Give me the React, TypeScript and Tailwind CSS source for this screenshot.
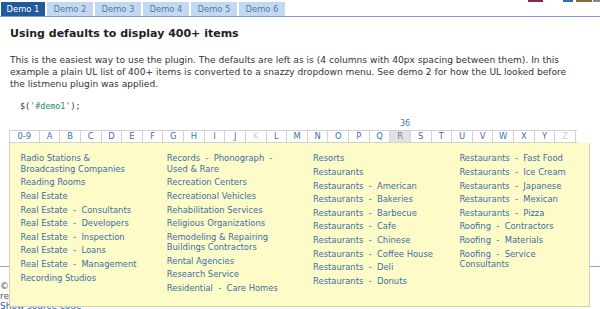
import React from "react";

const S = " \u00a0-\u00a0 ";

const columns: string[][] = [
  [
    "Radio Stations & Broadcasting Companies",
    "Reading Rooms",
    "Real Estate",
    `Real Estate${S}Consultants`,
    `Real Estate${S}Developers`,
    `Real Estate${S}Inspection`,
    `Real Estate${S}Loans`,
    `Real Estate${S}Management`,
    "Recording Studios",
  ],
  [
    `Records${S}Phonograph${S}Used & Rare`,
    "Recreation Centers",
    "Recreational Vehicles",
    "Rehabilitation Services",
    "Religious Organizations",
    "Remodeling & Repairing Buildings Contractors",
    "Rental Agencies",
    "Research Service",
    `Residential${S}Care Homes`,
  ],
  [
    "Resorts",
    "Restaurants",
    `Restaurants${S}American`,
    `Restaurants${S}Bakeries`,
    `Restaurants${S}Barbecue`,
    `Restaurants${S}Cafe`,
    `Restaurants${S}Chinese`,
    `Restaurants${S}Coffee House`,
    `Restaurants${S}Deli`,
    `Restaurants${S}Donuts`,
  ],
  [
    `Restaurants${S}Fast Food`,
    `Restaurants${S}Ice Cream`,
    `Restaurants${S}Japanese`,
    `Restaurants${S}Mexican`,
    `Restaurants${S}Pizza`,
    `Roofing${S}Contractors`,
    `Roofing${S}Materials`,
    `Roofing${S}Service Consultants`,
  ],
];

const letters = ["A","B","C","D","E","F","G","H","I","J","K","L","M","N","O","P","Q","R","S","T","U","V","W","X","Y","Z"];
const tabs = ["Demo 1", "Demo 2", "Demo 3", "Demo 4", "Demo 5", "Demo 6"];

export default function App() {
  return (
    <div className="relative w-[600px] h-[309px] overflow-hidden bg-white font-['DejaVu_Sans',Verdana,sans-serif] text-[#333]">
      {/* cut-off header images at top right */}
      <div className="absolute top-0 right-0 flex h-[2px]">
        <div className="w-[15px] bg-[#7b2d57] mr-[20px]" />
        <div className="w-[10px] bg-[#2f6fb8] mr-[3px]" />
        <div className="w-[16px] bg-[#e58a2e] border border-[#8a6a40] mr-[1px]" />
        <div className="w-[7px] border border-[#888]" />
      </div>

      {/* tabs */}
      <div className="flex gap-[2px] pl-[1px] pt-[2px] border-b border-[#7d9bcb]">
        {tabs.map((t, i) => (
          <div
            key={t}
            className={
              i === 0
                ? "w-[44px] h-[14px] flex items-center justify-center text-[8.4px] leading-[14px] bg-[#22599b] text-white"
                : "w-[46px] h-[14px] flex items-center justify-center text-[8.4px] leading-[14px] bg-[#c6d8f0] text-[#4a78b2]"
            }
          >
            {t}
          </div>
        ))}
      </div>

      <div className="pl-[10px]">
        <h2 className="mt-[10px] text-[11px] leading-[14px] font-bold text-[#222]">
          Using defaults to display 400+ items
        </h2>
        <p className="mt-[12.7px] text-[9.1px] leading-[12px] text-[#333] whitespace-nowrap">
          This is the easiest way to use the plugin. The defaults are left as is (4 columns with 40px spacing between them). In this
          <br />
          example a plain UL list of 400+ items is converted to a snazzy dropdown menu. See demo 2 for how the UL looked before
          <br />
          the listmenu plugin was applied.
        </p>
        <div className="mt-[11.5px] ml-[10px] font-['DejaVu_Sans_Mono',monospace] text-[8.4px] leading-[10px] text-[#333]">
          $(<span className="text-[#2e8b6e]">'#demo1'</span>);
        </div>

        {/* list menu */}
        <div className="relative z-10 ml-[-1px] mt-[6.5px] w-[568px]">
          <div className="relative h-[12px]">
            <span className="absolute left-[386px] w-[20px] text-center text-[8px] leading-[12px] text-[#4a78b2]">
              36
            </span>
          </div>
          <div className="flex h-[13px] border-y border-[#d2d2d2] bg-white">
            <div className="w-[30.7px] border-x border-[#d2d2d2] flex items-center justify-center text-[8.4px] text-[#3f6fa8]">
              0-9
            </div>
            {letters.map((l) => (
              <div
                key={l}
                className={
                  l === "R"
                    ? "w-[20.64px] border-r border-[#d2d2d2] flex items-center justify-center text-[8.4px] bg-[#e2e2e2] text-[#6b7f9e]"
                    : l === "K" || l === "Z"
                    ? "w-[20.64px] border-r border-[#d2d2d2] flex items-center justify-center text-[8.4px] text-[#cfcfcf]"
                    : "w-[20.64px] border-r border-[#d2d2d2] flex items-center justify-center text-[8.4px] text-[#3f6fa8]"
                }
              >
                {l}
              </div>
            ))}
          </div>

          {/* dropdown */}
          <div className="absolute z-20 left-0 top-[25px] w-[581px] h-[164px] bg-[#fdfcc8] border-x border-b border-[#cfcfc0] pl-[10.5px] pt-[10.8px]">
            <div className="grid grid-cols-[repeat(4,123px)] gap-x-[23.3px]">
              {columns.map((col, ci) => (
                <ul key={ci}>
                  {col.map((item) => (
                    <li key={item} className="pb-[3.3px] text-[8.4px] leading-[10.3px] text-[#3b6ea5]">
                      {item}
                    </li>
                  ))}
                </ul>
              ))}
            </div>
          </div>
        </div>
      </div>

      {/* footer (mostly covered by the dropdown) */}
      <div className="relative z-0 mt-[123px] border-t border-[#8ea6cd] pt-[14px] text-[9px] leading-[10px] text-[#555] whitespace-nowrap">
        <div>©2010 iHwy, Inc. All rights reserved.</div>
        <div>registered trademarks of their owners.</div>
        <div className="text-[#2a62b0] underline">Show source code</div>
      </div>
    </div>
  );
}
